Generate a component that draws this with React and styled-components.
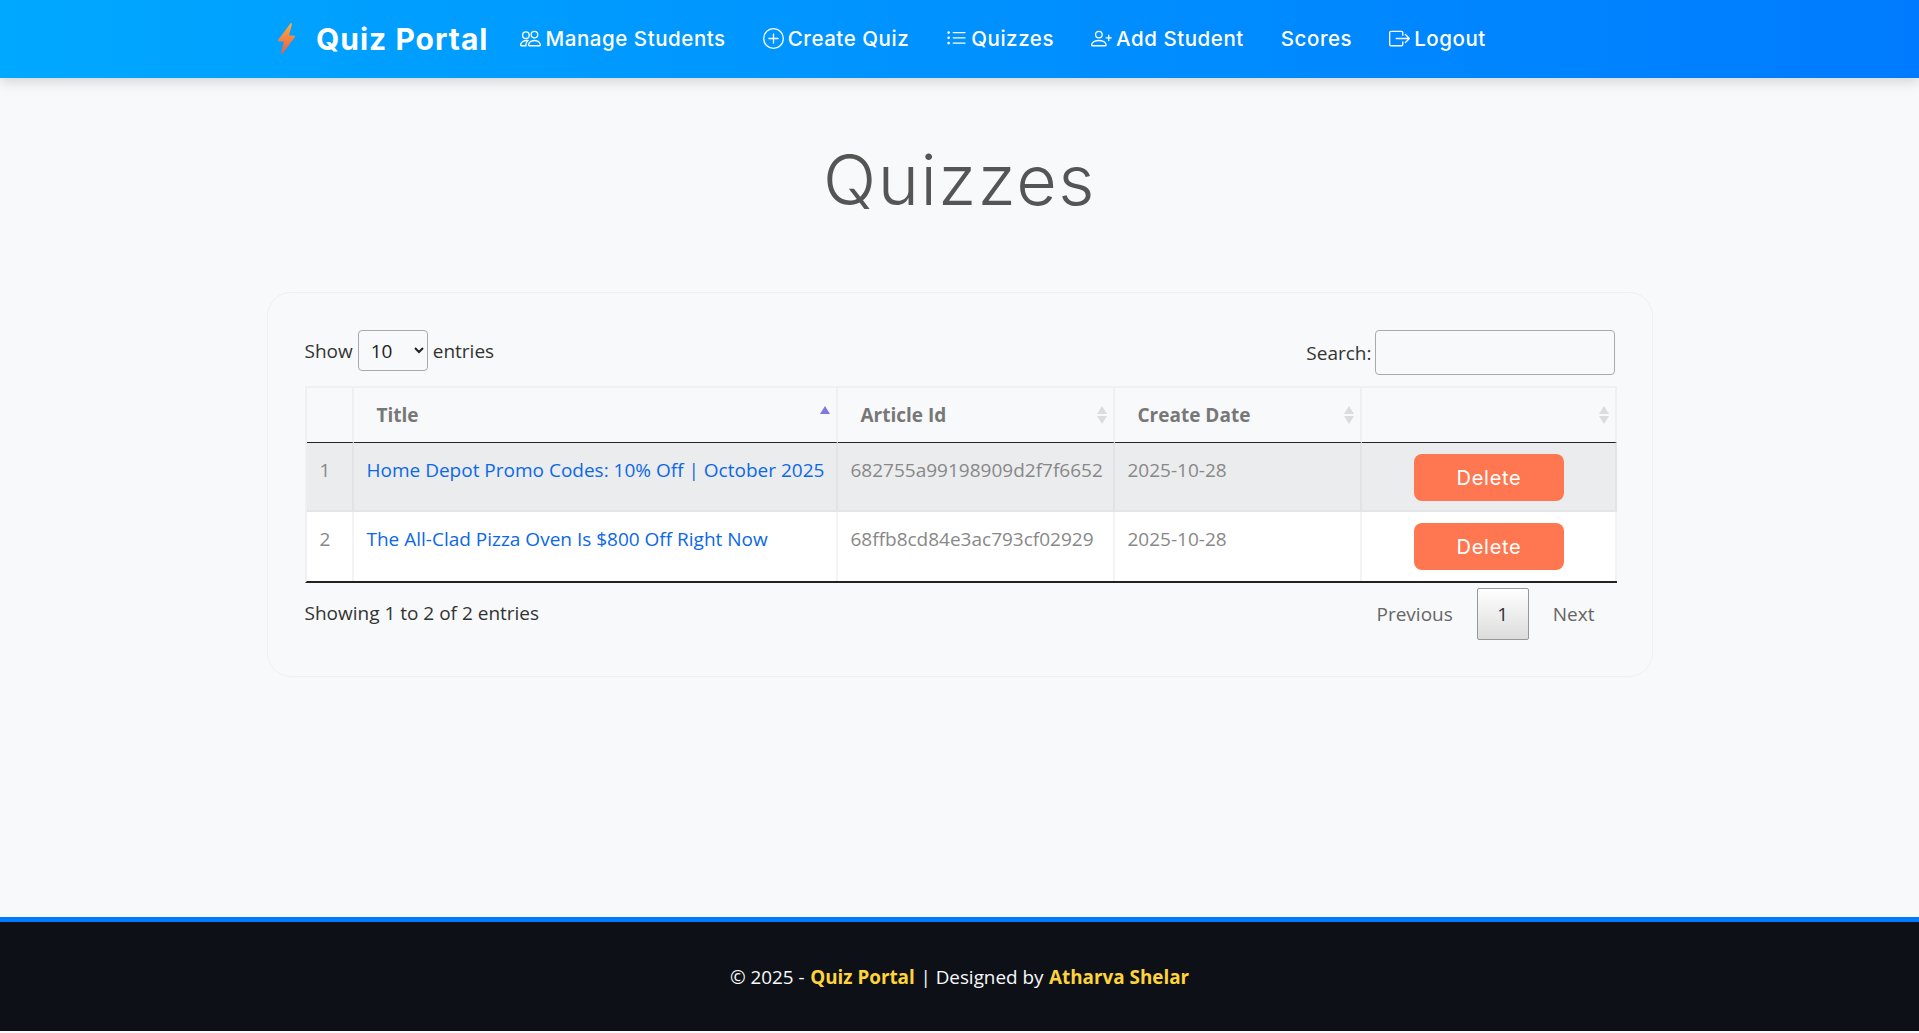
import React from "react";
import styled, { createGlobalStyle } from "styled-components";
import { BsPeople, BsPlusCircle, BsListUl, BsPersonPlus, BsBoxArrowRight } from "react-icons/bs";

const Global = createGlobalStyle`
  html, body { margin: 0; padding: 0; background: #f8f9fa; }
  body { font-family: "Open Sans", "Noto Sans", sans-serif; font-size: 19px; color: #333; }
  * { box-sizing: border-box; }
`;
const Page = styled.div`
  min-height: 1031px;
  display: flex;
  flex-direction: column;
`;
const Navbar = styled.nav`
  height: 78px;
  flex: none;
  background: linear-gradient(90deg, #00a8ff, #007bff);
  box-shadow: 0 4px 12px rgba(0, 0, 0, 0.15);
  display: flex;
  align-items: center;
  padding: 0 0 1px 278px;
  font-family: Inter, sans-serif;
`;
const Brand = styled.a`
  display: flex;
  align-items: center;
  gap: 21px;
  color: #fff;
  font-weight: 700;
  font-size: 30px;
  letter-spacing: 1px;
  margin-right: 32px;
`;
const NavLink = styled.a`
  display: flex;
  align-items: center;
  gap: 4px;
  color: #fff;
  font-size: 20.5px;
  font-weight: 500;
  letter-spacing: 0.55px;
  margin-right: 37px;
  svg { width: 21px; height: 21px; flex: none; }
`;
const Main = styled.main`
  flex: 1;
  width: 1386px;
  margin: 0 auto;
`;
const Heading = styled.h1`
  margin: 62px 0 72px;
  text-align: center;
  font-family: Inter, sans-serif;
  font-weight: 300;
  font-size: 70px;
  letter-spacing: 1.5px;
  line-height: 80px;
  color: #555;
`;
const Card = styled.section`
  height: 385px;
  border: 1px solid #eff0f1;
  border-radius: 24px;
  padding: 37px 36px 37px 37px;
`;
const Controls = styled.div`
  display: flex;
  justify-content: space-between;
  align-items: flex-start;
  height: 56px;
`;
const Label = styled.label`
  display: flex;
  align-items: center;
  gap: 5px;
  height: 41px;
`;
const SearchLabel = styled(Label)`
  height: 45px;
  gap: 3px;
  margin-right: 1px;
`;
const Select = styled.select`
  width: 70px;
  height: 41px;
  padding: 0 8px;
  font: inherit;
  color: #222;
  background: #f8f9fa;
  border: 1px solid #aaa;
  border-radius: 4px;
`;
const Input = styled.input`
  width: 240px;
  height: 45px;
  background: transparent;
  border: 1px solid #aaa;
  border-radius: 4px;
`;
const Table = styled.table`
  width: 1310px;
  table-layout: fixed;
  border-collapse: separate;
  border-spacing: 0;
  border-left: 2px solid #eef0f1;
  border-bottom: 2px solid #222;
`;
const Th = styled.th`
  position: relative;
  height: 57px;
  padding: 0 0 0 ${p => p.$pad || 23}px;
  text-align: left;
  font-weight: 700;
  color: #777;
  border-top: 2px solid #eef0f1;
  border-right: 2px solid #eef0f1;
  border-bottom: 1px solid #222;
`;
const Td = styled.td`
  vertical-align: top;
  padding: ${p => (p.$action ? "11px 0 9px 2px" : "14px 13px")};
  height: 69px;
  color: #888;
  background: ${p => (p.$odd ? "#ebecee" : "#fff")};
  border-right: 2px solid ${p => (p.$odd ? "#e2e3e5" : "#f3f3f4")};
  border-bottom: ${p => (p.$odd ? "2px solid #e4e5e7" : "0")};
  text-align: ${p => (p.$action ? "center" : "left")};
`;
const TitleLink = styled.a`
  color: #0b68e6;
  white-space: nowrap;
`;
const DeleteButton = styled.button`
  width: 150px;
  height: 47px;
  border: 0;
  border-radius: 8px;
  background: #ff7751;
  color: #fff;
  font-family: Inter, sans-serif;
  font-size: 20px;
  font-weight: 400;
  letter-spacing: 0.7px;
`;
const Arrows = styled.span`
  position: absolute;
  right: 6px;
  top: 18px;
  display: flex;
  flex-direction: column;
  gap: 2px;
`;
const Arrow = styled.i`
  display: block;
  width: 0;
  height: 0;
  border-left: 5px solid transparent;
  border-right: 5px solid transparent;
  ${p => (p.$down ? "border-top" : "border-bottom")}: 8px solid ${p => p.$color || "#dcdcdc"};
  ${p => p.$hidden && "visibility: hidden;"}
`;
const Footerbar = styled.div`
  display: flex;
  justify-content: space-between;
  align-items: flex-start;
  padding-top: 5px;
`;
const Info = styled.div`
  line-height: 51px;
`;
const Pager = styled.div`
  display: flex;
  align-items: center;
  color: #666;
  margin-right: -3px;
`;
const PageLink = styled.a`
  padding: 0 ${p => p.$pad}px;
`;
const Current = styled.span`
  width: 52px;
  height: 52px;
  display: flex;
  align-items: center;
  justify-content: center;
  color: #333;
  border: 1px solid #979797;
  border-radius: 2px;
  background: linear-gradient(#fff, #dcdcdc);
`;
const Foot = styled.footer`
  flex: none;
  height: 114px;
  border-top: 5px solid #007bff;
  background: #0d1117;
  color: #f8f9fa;
  display: flex;
  align-items: center;
  justify-content: center;
  gap: 0.3em;
  font-size: 18.85px;
`;
const Gold = styled.strong`
  color: #ffd43b;
`;

const Bolt = () => (
  <svg width="17" height="31" viewBox="2.5 0 11 16" preserveAspectRatio="none">
    <defs>
      <linearGradient id="bolt" x1="0" y1="0" x2="0" y2="1">
        <stop offset="0" stopColor="#ffad3a" />
        <stop offset="1" stopColor="#e65c4f" />
      </linearGradient>
    </defs>
    <path fill="url(#bolt)" d="M11.251.068a.5.5 0 0 1 .227.58L9.677 6.5H13a.5.5 0 0 1 .364.843l-8 8.5a.5.5 0 0 1-.842-.49L6.323 9.5H3a.5.5 0 0 1-.364-.843l8-8.5a.5.5 0 0 1 .615-.09z" />
  </svg>
);

const SortArrows = ({ active }) => (
  <Arrows>
    <Arrow $color={active ? "#7a7ae0" : undefined} />
    <Arrow $down $hidden={active} />
  </Arrows>
);

const rows = [
  ["Home Depot Promo Codes: 10% Off | October 2025", "682755a99198909d2f7f6652", "2025-10-28"],
  ["The All-Clad Pizza Oven Is $800 Off Right Now", "68ffb8cd84e3ac793cf02929", "2025-10-28"],
];

export default function App() {
  return (
    <Page>
      <Global />
      <Navbar>
        <Brand><Bolt />Quiz Portal</Brand>
        <NavLink><BsPeople />Manage Students</NavLink>
        <NavLink><BsPlusCircle />Create Quiz</NavLink>
        <NavLink><BsListUl />Quizzes</NavLink>
        <NavLink><BsPersonPlus />Add Student</NavLink>
        <NavLink>Scores</NavLink>
        <NavLink><BsBoxArrowRight />Logout</NavLink>
      </Navbar>
      <Main>
        <Heading>Quizzes</Heading>
        <Card>
          <Controls>
            <Label>Show <Select defaultValue="10"><option>10</option><option>25</option></Select> entries</Label>
            <SearchLabel>Search: <Input /></SearchLabel>
          </Controls>
          <Table>
            <colgroup>
              <col style={{ width: 47 }} />
              <col style={{ width: 484 }} />
              <col style={{ width: 277 }} />
              <col style={{ width: 247 }} />
              <col style={{ width: 255 }} />
            </colgroup>
            <thead>
              <tr>
                <Th />
                <Th>Title<SortArrows active /></Th>
                <Th>Article Id<SortArrows /></Th>
                <Th>Create Date<SortArrows /></Th>
                <Th><SortArrows /></Th>
              </tr>
            </thead>
            <tbody>
              {rows.map((r, i) => (
                <tr key={r[1]}>
                  <Td $odd={i === 0}>{i + 1}</Td>
                  <Td $odd={i === 0}><TitleLink>{r[0]}</TitleLink></Td>
                  <Td $odd={i === 0}>{r[1]}</Td>
                  <Td $odd={i === 0}>{r[2]}</Td>
                  <Td $odd={i === 0} $action><DeleteButton>Delete</DeleteButton></Td>
                </tr>
              ))}
            </tbody>
          </Table>
          <Footerbar>
            <Info>Showing 1 to 2 of 2 entries</Info>
            <Pager>
              <PageLink $pad={24}>Previous</PageLink>
              <Current>1</Current>
              <PageLink $pad={24}>Next</PageLink>
            </Pager>
          </Footerbar>
        </Card>
      </Main>
      <Foot>© 2025 - <Gold>Quiz Portal</Gold> | Designed by <Gold>Atharva Shelar</Gold></Foot>
    </Page>
  );
}
